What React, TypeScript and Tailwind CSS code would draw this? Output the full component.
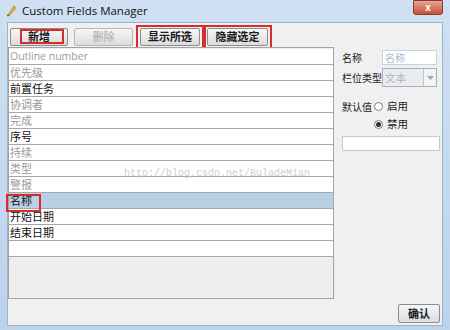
const rows = [
  { label: "Outline number", on: false },
  { label: "优先级", on: false },
  { label: "前置任务", on: true },
  { label: "协调者", on: false },
  { label: "完成", on: false },
  { label: "序号", on: true },
  { label: "持续", on: false },
  { label: "类型", on: false },
  { label: "警报", on: false },
  { label: "名称", on: true, selected: true },
  { label: "开始日期", on: true },
  { label: "结束日期", on: true },
];

const font = "font-['Noto_Sans_CJK_SC','Liberation_Sans',sans-serif]";

function Btn({ children, disabled, w }: { children: React.ReactNode; disabled?: boolean; w: string }) {
  return (
    <div
      className={`${w} h-[18px] flex items-center justify-center rounded-[2px] border border-[#8d8d8d] bg-gradient-to-b from-[#f6f6f6] to-[#dcdcdc] text-[11px] font-bold ${
        disabled ? "text-[#a8a8a8] font-normal border-[#b5b5b5]" : "text-[#1a1a1a]"
      }`}
    >
      {children}
    </div>
  );
}

function Radio({ checked, label }: { checked?: boolean; label: string }) {
  return (
    <div className="flex items-center gap-[4px] whitespace-nowrap">
      <span className="w-[9px] h-[9px] rounded-full border border-[#7f7f7f] bg-white flex items-center justify-center">
        {checked && <span className="w-[5px] h-[5px] rounded-full bg-[#333]" />}
      </span>
      <span className="text-[10.5px] text-[#222]">{label}</span>
    </div>
  );
}

export default function App() {
  return (
    <div className={`w-[450px] h-[330px] flex flex-col bg-gradient-to-b from-[#cfe0f2] to-[#bcd3ec] ${font}`}>
      {/* title bar */}
      <div className="h-[22px] flex items-center pl-[5px] pr-[7px] shrink-0">
        <svg width="12" height="12" viewBox="0 0 12 12">
          <path d="M2 11 L9 1 L11 3 L4 11 Z" fill="#e7b52c" stroke="#9a7a20" strokeWidth="0.6" />
          <path d="M2 11 L4 11 L3 9 Z" fill="#555" />
        </svg>
        <span className="ml-[5px] text-[11.5px] text-[#111] font-['Open_Sans','Liberation_Sans',sans-serif]">
          Custom Fields Manager
        </span>
        <div className="ml-auto self-start w-[30px] h-[15px] rounded-b-[3px] border border-[#8b3a2c] bg-gradient-to-b from-[#e8a493] to-[#c7503a] flex items-center justify-center">
          <span className="text-white text-[10px] font-bold leading-none font-['Liberation_Sans',sans-serif]">x</span>
        </div>
      </div>

      {/* client area */}
      <div className="flex-1 mx-[7px] mb-[4px] bg-[#f0f0f0] border border-[#9db3cc] flex flex-col">
        {/* toolbar */}
        <div className="flex items-center pl-[2px] pt-[3px] h-[24px]">
          <div className="relative">
            <Btn w="w-[58px]">新增</Btn>
            <div className="absolute left-[10px] top-[1px] w-[44px] h-[15px] border-2 border-[#d82b2b]" />
          </div>
          <div className="ml-[6px]">
            <Btn w="w-[59px]" disabled>删除</Btn>
          </div>
          <div className="ml-[3px] border-2 border-[#d82b2b] px-[2px] py-[1px]">
            <Btn w="w-[60px]">显示所选</Btn>
          </div>
          <div className="border-2 border-[#d82b2b] pl-[1px] pr-[2px] py-[1px]">
            <Btn w="w-[61px]">隐藏选定</Btn>
          </div>
        </div>

        {/* main */}
        <div className="flex">
          {/* list */}
          <div className="relative w-[326px] h-[252px] border border-[#a3a3a3] bg-[#eeeeee] flex flex-col pt-[1px]">
            {rows.map((r) => (
              <div
                key={r.label}
                className={`h-[16px] shrink-0 border-b border-[#a8a8a8] flex items-center text-[11px] leading-none ${
                  r.selected ? "bg-[#b9cfe6]" : "bg-white"
                } ${r.on ? "text-[#111]" : "text-[#9a9a9a]"}`}
              >
                <span className={`pl-[1px] ${r.label === "Outline number" ? "font-['Open_Sans','Liberation_Sans',sans-serif] text-[10.5px]" : ""}`}>
                  {r.label}
                </span>
              </div>
            ))}
            <div className="h-[16px] shrink-0 border-b border-[#a8a8a8] bg-white" />
            <div className="absolute left-[-3px] top-[146px] w-[35px] h-[18px] border-2 border-[#d82b2b]" />
            <div className="absolute left-[115px] top-[118px] text-[10px] text-[#cfcfcf] font-['Liberation_Mono',monospace] pointer-events-none">
              http://blog.csdn.net/BuladeMian
            </div>
          </div>

          {/* right panel */}
          <div className="ml-[8px] flex flex-col text-[10px] text-[#222] whitespace-nowrap">
            <div className="flex items-center mt-[3px] h-[15px]">
              <span className="w-[40px]">名称</span>
              <div className="w-[55px] h-[15px] bg-white border border-[#c5d3e2] text-[#a9bbd2] text-[10px] flex items-center pl-[2px]">
                名称
              </div>
            </div>
            <div className="flex items-center mt-[3px] h-[19px]">
              <span className="w-[40px]">栏位类型</span>
              <div className="w-[55px] h-[19px] border border-[#9fb3c9] bg-[#ececec] flex">
                <div className="flex-1 flex items-center pl-[2px] text-[#a3b6cf] text-[10.5px]">文本</div>
                <div className="w-[13px] border-l border-[#b8c6d6] bg-[#f3f3f3] flex items-center justify-center">
                  <svg width="7" height="4" viewBox="0 0 7 4">
                    <path d="M0 0 L7 0 L3.5 4 Z" fill="#9aa8b8" />
                  </svg>
                </div>
              </div>
            </div>
            <div className="flex items-center mt-[12px] h-[14px]">
              <span className="w-[32px]">默认值</span>
              <Radio label="启用" />
            </div>
            <div className="flex items-center mt-[4px] h-[14px] pl-[32px]">
              <Radio checked label="禁用" />
            </div>
            <div className="mt-[5px] w-[98px] h-[15px] bg-white border border-[#c9c9c9]" />
          </div>
        </div>

        {/* bottom */}
        <div className="flex justify-end pr-[2px] pt-[5px]">
          <div className="w-[42px] h-[19px] flex items-center justify-center rounded-[2px] border border-[#8d8d8d] bg-gradient-to-b from-[#f6f6f6] to-[#d9dde3] text-[11px] font-bold text-[#1a1a1a]">
            确认
          </div>
        </div>
      </div>
    </div>
  );
}
